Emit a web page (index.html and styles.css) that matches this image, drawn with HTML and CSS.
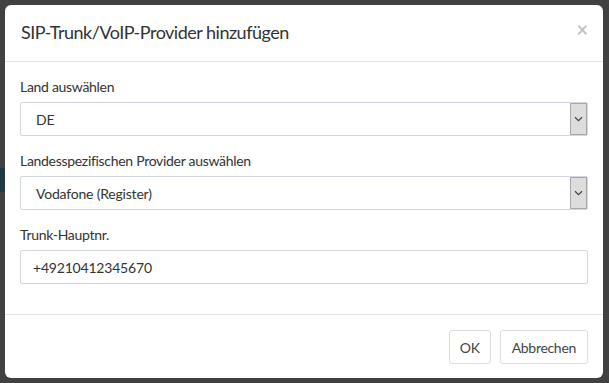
FILE: index.html
```html
<!DOCTYPE html>
<html lang="de">
<head>
<meta charset="utf-8">
<link rel="stylesheet" href="styles.css">
</head>
<body>
<div class="backdrop">
  <div class="behind-strip"></div>
  <div class="modal">
    <div class="modal-header">
      <h4 class="modal-title">SIP-Trunk/VoIP-Provider hinzufügen</h4>
      <span class="close">×</span>
    </div>
    <div class="modal-body">
      <div class="form-group">
        <label class="label">Land auswählen</label>
        <div class="select">
          <span class="select-text">DE</span>
          <span class="select-arrow"><svg width="9" height="6" viewBox="0 0 9 6"><path d="M1 1.2 L4.5 4.6 L8 1.2" fill="none" stroke="#444" stroke-width="1.2"/></svg></span>
        </div>
      </div>
      <div class="form-group">
        <label class="label">Landesspezifischen Provider auswählen</label>
        <div class="select">
          <span class="select-text">Vodafone (Register)</span>
          <span class="select-arrow"><svg width="9" height="6" viewBox="0 0 9 6"><path d="M1 1.2 L4.5 4.6 L8 1.2" fill="none" stroke="#444" stroke-width="1.2"/></svg></span>
        </div>
      </div>
      <div class="form-group">
        <label class="label">Trunk-Hauptnr.</label>
        <div class="input">+49210412345670</div>
      </div>
    </div>
    <div class="modal-footer">
      <button class="btn btn-ok">OK</button>
      <button class="btn">Abbrechen</button>
    </div>
  </div>
</div>
</body>
</html>
```

FILE: styles.css
```css
* { box-sizing: border-box; }
html, body { margin: 0; padding: 0; }
body {
  width: 609px;
  height: 383px;
  overflow: hidden;
  background: #404040;
  font-family: "Lato", "Source Sans Pro", "Noto Sans", sans-serif;
  color: #333;
}
.backdrop {
  position: relative;
  width: 609px;
  height: 383px;
  padding: 5px 0 0 5px;
  background: #414141;
}
.behind-strip {
  position: absolute;
  left: 0;
  top: 168px;
  width: 6px;
  height: 24px;
  background: #1f3a44;
}
.modal {
  position: relative;
  width: 598px;
  background: #fff;
  border-radius: 6px;
  display: flex;
  flex-direction: column;
}
.modal-header {
  height: 57px;
  padding: 0 15px 0 16px;
  display: flex;
  align-items: center;
  justify-content: space-between;
  border-bottom: 1px solid #e5e5e5;
}
.modal-title {
  margin: 0;
  font-size: 18px;
  font-weight: 400;
  letter-spacing: -0.5px;
  color: #333;
  margin-top: -3px;
}
.close {
  font-size: 20px;
  font-weight: 700;
  color: #c4c4c4;
  line-height: 1;
  margin-top: -8px;
}
.modal-body {
  padding: 15px;
}
.form-group {
  margin-bottom: 15px;
}
.label {
  display: block;
  font-size: 14px;
  line-height: 20px;
  margin-bottom: 5px;
  letter-spacing: -0.3px;
  color: #333;
}
.select, .input {
  height: 34px;
  border: 1px solid #d2d6de;
  border-radius: 2px;
  font-size: 14px;
  letter-spacing: -0.2px;
  color: #333;
  display: flex;
  align-items: center;
}
.select-text {
  flex: 1;
  padding-left: 15px;
}
.select-arrow {
  width: 17px;
  height: 32px;
  background: #dddddd;
  border: 1px solid #a9a9a9;
  display: flex;
  align-items: center;
  justify-content: center;
}
.input {
  padding-left: 12px;
}
.modal-footer {
  border-top: 1px solid #e5e5e5;
  padding: 15px 15px 14px;
  display: flex;
  justify-content: flex-end;
  gap: 9px;
}
.btn {
  height: 34px;
  padding: 0 11px;
  background: #fff;
  border: 1px solid #ddd;
  border-radius: 3px;
  font-family: inherit;
  font-size: 14px;
  letter-spacing: -0.3px;
  color: #444;
}
.btn-ok {
  padding: 0 10px;
}
```
